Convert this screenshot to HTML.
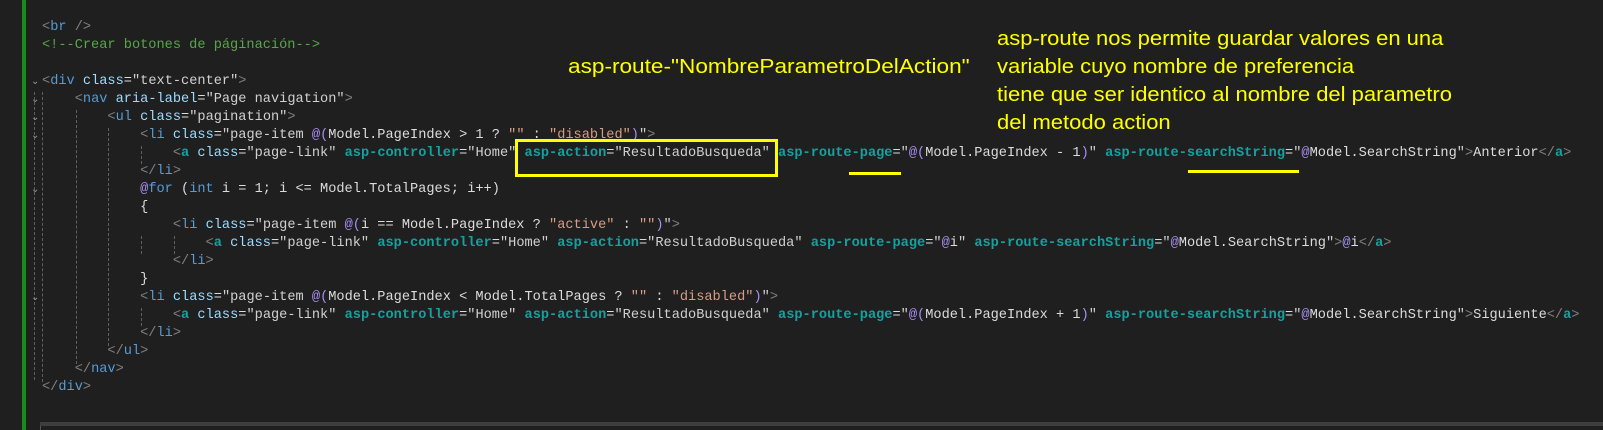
<!DOCTYPE html>
<html><head><meta charset="utf-8"><style>
body{margin:0;width:1603px;height:430px;background:#1f1f1f;position:relative;overflow:hidden}
.g{position:absolute;left:22px;top:0;width:4px;height:430px;background:#1a8a1a}
pre{position:absolute;left:42px;top:19px;margin:0;font-family:"Liberation Mono",monospace;font-size:13.63px;line-height:18px;color:#dcdcdc}
.t{color:#808080}.n{color:#569cd6}.a{color:#9cdcfe}.s{color:#d0d0d0}.h{color:#16a0a0;font-weight:bold}.r{color:#a88ef0}.o{color:#d69d85}.c{color:#57a64a}.k{color:#569cd6}
.ann{position:absolute;color:#ffff00;font-family:"Liberation Sans",sans-serif;font-size:20px;line-height:28px;white-space:nowrap;transform:scaleX(1.1);transform-origin:0 0}
.box{position:absolute;left:515px;top:139px;width:257px;height:32px;border:3px solid #ffff00}
.u{position:absolute;height:3px;background:#ffff00}
.gd{position:absolute;border-left:1px dashed #606060;width:0}
.bot{position:absolute;left:40px;top:422px;right:0;height:4px;background:#3e3e3e}
.bl{position:absolute;left:40px;top:426px;width:1px;height:4px;background:#555}
.f{position:absolute;left:31px;color:#999;font:10px "DejaVu Sans",sans-serif}
</style></head><body>
<div class="g"></div>
<div class="gd" style="left:42px;top:92px;height:290px"></div>
<div class="gd" style="left:76px;top:110px;height:254px"></div>
<div class="gd" style="left:108px;top:128px;height:218px"></div>
<div class="gd" style="left:141px;top:146px;height:18px"></div>
<div class="gd" style="left:141px;top:236px;height:18px"></div>
<div class="gd" style="left:174px;top:236px;height:18px"></div>
<div class="gd" style="left:141px;top:308px;height:18px"></div>
<div class="gd" style="left:34px;top:92px;height:288px"></div>
<div class="f" style="top:76px">⌄</div>
<div class="f" style="top:94px">⌄</div>
<div class="f" style="top:112px">⌄</div>
<div class="f" style="top:130px">⌄</div>
<div class="f" style="top:184px">⌄</div>
<div class="f" style="top:292px">⌄</div>
<pre><span class="t">&lt;</span><span class="n">br</span> <span class="t">/&gt;</span>
<span class="c">&lt;!--Crear botones de páginación--&gt;</span>

<span class="t">&lt;</span><span class="n">div</span> <span class="a">class</span>=<span class="s">"text-center"</span><span class="t">&gt;</span>
    <span class="t">&lt;</span><span class="n">nav</span> <span class="a">aria-label</span>=<span class="s">"Page navigation"</span><span class="t">&gt;</span>
        <span class="t">&lt;</span><span class="n">ul</span> <span class="a">class</span>=<span class="s">"pagination"</span><span class="t">&gt;</span>
            <span class="t">&lt;</span><span class="n">li</span> <span class="a">class</span>=<span class="s">"page-item </span><span class="r">@(</span>Model.PageIndex &gt; 1 ? <span class="o">""</span> : <span class="o">"disabled"</span><span class="r">)</span><span class="s">"</span><span class="t">&gt;</span>
                <span class="t">&lt;</span><span class="h">a</span> <span class="a">class</span>=<span class="s">"page-link"</span> <span class="h">asp-controller</span>=<span class="s">"Home"</span> <span class="h">asp-action</span>=<span class="s">"ResultadoBusqueda"</span> <span class="h">asp-route-page</span>=<span class="s">"</span><span class="r">@(</span>Model.PageIndex - 1<span class="r">)</span><span class="s">"</span> <span class="h">asp-route-searchString</span>=<span class="s">"</span><span class="r">@</span>Model.SearchString<span class="s">"</span><span class="t">&gt;</span>Anterior<span class="t">&lt;/</span><span class="h">a</span><span class="t">&gt;</span>
            <span class="t">&lt;/</span><span class="n">li</span><span class="t">&gt;</span>
            <span class="r">@</span><span class="k">for</span> (<span class="k">int</span> i = 1; i &lt;= Model.TotalPages; i++)
            {
                <span class="t">&lt;</span><span class="n">li</span> <span class="a">class</span>=<span class="s">"page-item </span><span class="r">@(</span>i == Model.PageIndex ? <span class="o">"active"</span> : <span class="o">""</span><span class="r">)</span><span class="s">"</span><span class="t">&gt;</span>
                    <span class="t">&lt;</span><span class="h">a</span> <span class="a">class</span>=<span class="s">"page-link"</span> <span class="h">asp-controller</span>=<span class="s">"Home"</span> <span class="h">asp-action</span>=<span class="s">"ResultadoBusqueda"</span> <span class="h">asp-route-page</span>=<span class="s">"</span><span class="r">@</span>i<span class="s">"</span> <span class="h">asp-route-searchString</span>=<span class="s">"</span><span class="r">@</span>Model.SearchString<span class="s">"</span><span class="t">&gt;</span><span class="r">@</span>i<span class="t">&lt;/</span><span class="h">a</span><span class="t">&gt;</span>
                <span class="t">&lt;/</span><span class="n">li</span><span class="t">&gt;</span>
            }
            <span class="t">&lt;</span><span class="n">li</span> <span class="a">class</span>=<span class="s">"page-item </span><span class="r">@(</span>Model.PageIndex &lt; Model.TotalPages ? <span class="o">""</span> : <span class="o">"disabled"</span><span class="r">)</span><span class="s">"</span><span class="t">&gt;</span>
                <span class="t">&lt;</span><span class="h">a</span> <span class="a">class</span>=<span class="s">"page-link"</span> <span class="h">asp-controller</span>=<span class="s">"Home"</span> <span class="h">asp-action</span>=<span class="s">"ResultadoBusqueda"</span> <span class="h">asp-route-page</span>=<span class="s">"</span><span class="r">@(</span>Model.PageIndex + 1<span class="r">)</span><span class="s">"</span> <span class="h">asp-route-searchString</span>=<span class="s">"</span><span class="r">@</span>Model.SearchString<span class="s">"</span><span class="t">&gt;</span>Siguiente<span class="t">&lt;/</span><span class="h">a</span><span class="t">&gt;</span>
            <span class="t">&lt;/</span><span class="n">li</span><span class="t">&gt;</span>
        <span class="t">&lt;/</span><span class="n">ul</span><span class="t">&gt;</span>
    <span class="t">&lt;/</span><span class="n">nav</span><span class="t">&gt;</span>
<span class="t">&lt;/</span><span class="n">div</span><span class="t">&gt;</span></pre>
<div class="box"></div>
<div class="u" style="left:849px;top:172px;width:52px"></div>
<div class="u" style="left:1188px;top:170px;width:111px"></div>
<div class="ann" style="left:568px;top:53px;transform:scaleX(1.13)">asp-route-"NombreParametroDelAction"</div>
<div class="ann" style="left:997px;top:25px">asp-route nos permite guardar valores en una<br>variable cuyo nombre de preferencia<br>tiene que ser identico al nombre del parametro<br>del metodo action</div>
<div class="bot"></div><div class="bl"></div>
</body></html>
